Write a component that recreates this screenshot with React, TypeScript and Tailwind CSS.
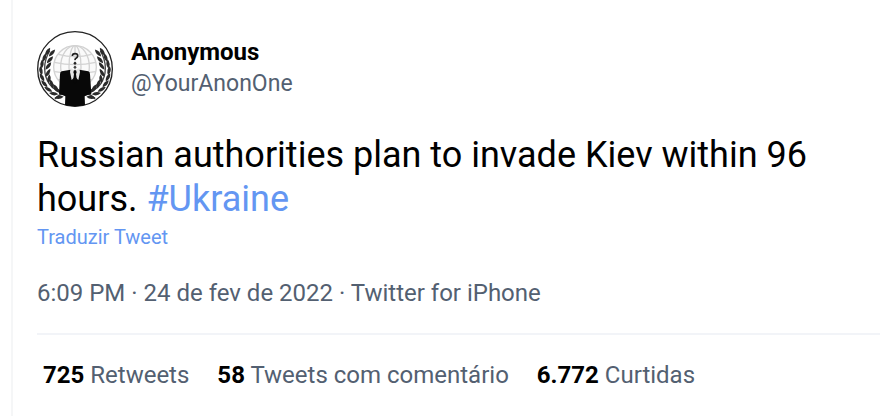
const stats = [
  { value: "725", label: "Retweets" },
  { value: "58", label: "Tweets com comentário" },
  { value: "6.772", label: "Curtidas" },
];

// x, y and angle of each laurel leaf on the left branch
const leaves = [
  [32, 62, -58],
  [45, 66, -48],
  [22, 80, -70],
  [39, 86, -48],
  [15, 99, -86],
  [34, 105, -52],
  [12, 119, 80],
  [33, 125, -60],
  [15, 139, 62],
  [36, 144, -84],
  [22, 158, 48],
  [44, 159, 72],
  [34, 175, 30],
  [56, 170, 54],
  [50, 188, 8],
  [62, 178, 30],
  [66, 199, -8],
];

function Laurel() {
  return (
    <g>
      <path
        d="M38 60C18 92 18 132 38 160c13 18 30 24 50 30M84 186c-12 2-22 8-30 18"
        fill="none"
        stroke="#444"
        strokeWidth="4"
      />
      {leaves.map(([x, y, angle]) => (
        <path
          key={`${x}-${y}`}
          d="M-14 0Q0-10 14 0Q0 10-14 0Z"
          fill="#2a2a2a"
          transform={`translate(${x} ${y}) rotate(${angle})`}
        />
      ))}
    </g>
  );
}

function Avatar() {
  return (
    <svg
      viewBox="0 0 228 228"
      className="size-19 shrink-0"
      role="img"
      aria-label="Anonymous"
    >
      <circle cx="114" cy="114" r="112" fill="#fff" stroke="#222" strokeWidth="4" />
      <g fill="none" stroke="#d2d2d2" strokeWidth="4">
        <circle cx="114" cy="108" r="64" fill="#fafafa" />
        <ellipse cx="114" cy="108" rx="43" ry="64" />
        <ellipse cx="114" cy="108" rx="18" ry="64" />
        <path d="M64 70q50 14 100 0M52 94q62 14 124 0M52 122q62 10 124 0M62 146h104M114 44v126" />
      </g>
      <Laurel />
      <g transform="translate(228 0) scale(-1 1)">
        <Laurel />
      </g>
      <path
        d="M101 116L74 121q-5 2-5 9L66 188l19 8-1 26q30 8 60 0l-1-26 20-8-4-58q0-7-5-9l-27-5-13 8z"
        fill="#080808"
      />
      <path d="M101 111l13 8 13-8 2 12-5 24-10-10-10 10-5-24z" fill="#e4e4e4" />
      <path d="M111 118h6l2 6-2 5 3 22-6 8-6-8 3-22-2-5z" fill="#080808" />
      <path
        d="M106 75q0-7 8-7t8 6q0 4-4 7-4 2-4 6"
        fill="none"
        stroke="#222"
        strokeWidth="5"
      />
      <circle cx="114" cy="97" r="4" fill="#222" />
      <circle cx="114" cy="109" r="4" fill="#444" />
    </svg>
  );
}

export default function App() {
  return (
    <main className="min-h-screen bg-white pl-[11px] font-['Roboto',sans-serif] text-2xl leading-8 text-[#536071]">
      <article className="min-h-screen border-l-2 border-[#f5f6f7] pt-[31px] pl-6">
        <header className="flex gap-[18px]">
          <Avatar />
          <div className="pt-[5px]">
            <h1 className="font-bold text-black">Anonymous</h1>
            <a href="#profile" className="block text-[23px]">
              @YourAnonOne
            </a>
          </div>
        </header>

        <p className="mt-[26px] pr-12 text-[36px] leading-11 text-black">
          Russian authorities plan to invade Kiev within 96 hours.{" "}
          <a href="#ukraine" className="text-[#6396f2]">
            #Ukraine
          </a>
        </p>
        <button type="button" className="block text-xl leading-8 text-[#6396f2]">
          Traduzir Tweet
        </button>

        <p className="mt-6">
          <time dateTime="2022-02-24T18:09">6:09 PM · 24 de fev de 2022</time> ·{" "}
          <a href="#source">Twitter for iPhone</a>
        </p>

        <ul className="mt-6 flex flex-wrap gap-x-7 border-t-2 border-[#f2f4f8] px-1.5 py-6">
          {stats.map((stat) => (
            <li key={stat.label}>
              <a href="#stats">
                <strong className="font-bold text-black">{stat.value}</strong>{" "}
                {stat.label}
              </a>
            </li>
          ))}
        </ul>
      </article>
    </main>
  );
}
